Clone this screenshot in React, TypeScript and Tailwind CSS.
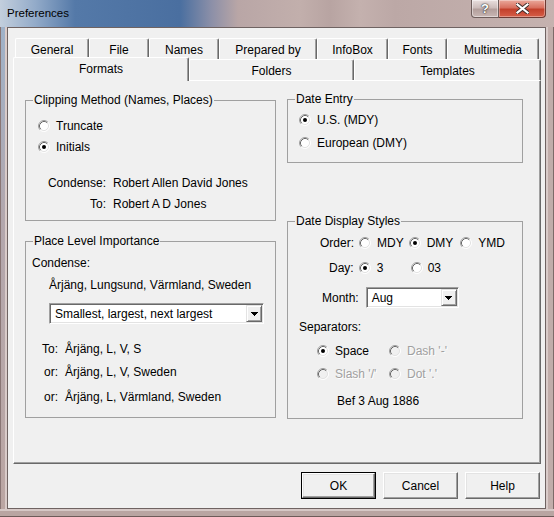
import React from "react";

const FONT = "font-['Liberation_Sans',Arial,sans-serif]";

function Radio({ checked = false, disabled = false }: { checked?: boolean; disabled?: boolean }) {
  return (
    <svg width="12" height="12" viewBox="0 0 12 12" className="shrink-0 block">
      <circle cx="6" cy="6" r="5" fill={disabled ? "#f0f0f0" : "#ffffff"} />
      <path d="M2.11 9.89A5.5 5.5 0 0 1 9.89 2.11" fill="none" stroke="#a0a0a0" />
      <path d="M9.89 2.11A5.5 5.5 0 0 1 2.11 9.89" fill="none" stroke="#ffffff" />
      <path d="M2.82 9.18A4.5 4.5 0 0 1 9.18 2.82" fill="none" stroke="#696969" />
      <path d="M9.18 2.82A4.5 4.5 0 0 1 2.82 9.18" fill="none" stroke="#e3e3e3" />
      {checked && <circle cx="6" cy="6" r="2" fill={disabled ? "#a0a0a0" : "#000000"} />}
    </svg>
  );
}

function Group({
  title,
  className,
  children,
}: {
  title: string;
  className: string;
  children: React.ReactNode;
}) {
  return (
    <fieldset className={`border border-[#a0a0a0] m-0 p-0 shrink-0 ${className}`}>
      <legend className="ml-[7px] px-[1px] leading-[14px]">{title}</legend>
      {children}
    </fieldset>
  );
}

function Combo({ value, className, btnW }: { value: string; className: string; btnW: string }) {
  return (
    <div
      className={`flex items-center bg-white border border-t-[#a0a0a0] border-l-[#a0a0a0] border-r-white border-b-white shadow-[inset_1px_1px_0_#696969,inset_-1px_-1px_0_#e3e3e3] ${className}`}
    >
      <span className="flex-1 pl-[5px] leading-[14px] whitespace-nowrap">{value}</span>
      <div
        className={`${btnW} h-[17px] mr-[1px] flex items-center justify-center bg-[#f0f0f0] border border-t-[#e3e3e3] border-l-[#e3e3e3] border-r-[#696969] border-b-[#696969] shadow-[inset_1px_1px_0_#ffffff,inset_-1px_-1px_0_#a0a0a0]`}
      >
        <svg width="7" height="4" viewBox="0 0 7 4" shapeRendering="crispEdges" className="block">
          <path d="M0 0H7V1H6V2H5V3H4V4H3V3H2V2H1V1H0Z" fill="#000" />
        </svg>
      </div>
    </div>
  );
}

function Tab({ label, w, h, selected = false }: { label: string; w: string; h: string; selected?: boolean }) {
  return (
    <div
      className={`${w} ${h} shrink-0 flex items-center justify-center bg-[#f0f0f0] border-t border-l border-white border-r border-r-[#696969] rounded-t-[2px] shadow-[inset_-1px_0_0_#a0a0a0] leading-[14px] ${
        selected ? "self-start relative z-10 pb-[1px]" : "pt-[2px]"
      }`}
    >
      {label}
    </div>
  );
}

function Btn({ label, def = false }: { label: string; def?: boolean }) {
  return (
    <div
      className={`w-[75px] h-[27px] flex items-center justify-center ${
        def ? "border border-[#000]" : ""
      }`}
    >
      <div
        className={`w-full h-full flex items-center justify-center bg-[#f0f0f0] border border-t-white border-l-white border-r-[#696969] border-b-[#696969] shadow-[inset_-1px_-1px_0_#a0a0a0,inset_1px_1px_0_#e3e3e3] leading-[14px]`}
      >
        {label}
      </div>
    </div>
  );
}

const disabledText = "text-[#a0a0a0] [text-shadow:1px_1px_0_#ffffff]";

export default function App() {
  return (
    <div className={`w-[554px] h-[517px] flex flex-col text-[12px] text-black ${FONT} bg-[#c0acaa] overflow-hidden`}>
      {/* Title bar */}
      <div className="h-[27px] shrink-0 flex items-start bg-[linear-gradient(90deg,#c3cfdd_0px,#93abc9_35px,#5479a8_75px,#4a6fa0_180px,#8d90a8_212px,#b9a6a6_238px,#c2afac_300px,#b8a4a2_330px,#c4b1ae_360px,#bca8a6_395px,#c5b2af_554px)]">
        <div className="flex-1 pl-[7px] pt-[6px] text-[11.5px] leading-[14px] text-black">Preferences</div>
        <div className="flex mr-[8px] mt-0">
          <div className="w-[28px] h-[18px] flex items-center justify-center rounded-bl-[4px] border border-t-0 border-[#6e5d5b] bg-[linear-gradient(180deg,#e9dfde_0%,#cdbdbb_45%,#b39f9c_55%,#c9b7b4_100%)] shadow-[inset_0_0_0_1px_rgba(255,255,255,0.45)]">
            <span className="text-white font-bold text-[13px] leading-[13px] [text-shadow:0_0_2px_#333,0_0_1px_#000]">?</span>
          </div>
          <div className="w-[47px] h-[18px] flex items-center justify-center rounded-br-[4px] border border-l-0 border-t-0 border-[#6e3a33] bg-[linear-gradient(180deg,#eaa99c_0%,#d8705f_45%,#c2402b_55%,#d65e48_100%)] shadow-[inset_0_0_0_1px_rgba(255,255,255,0.35)]">
            <svg width="13" height="11" viewBox="0 0 13 11" className="block">
              <path d="M1.5 1.5L11.5 9.5M11.5 1.5L1.5 9.5" stroke="#3a2a28" strokeWidth="4" strokeLinecap="square" />
              <path d="M1.5 1.5L11.5 9.5M11.5 1.5L1.5 9.5" stroke="#ffffff" strokeWidth="2.2" strokeLinecap="square" />
            </svg>
          </div>
        </div>
      </div>

      <div className="flex-1 flex min-h-0">
        {/* left frame */}
        <div className="w-[7px] shrink-0 bg-[linear-gradient(180deg,#9fb2c9_0%,#b3a7ad_40%,#bba6a3_100%)] shadow-[inset_1px_0_0_#8a7675,inset_-2px_0_0_#d9cbc9]" />
        {/* client */}
        <div className="flex-1 flex flex-col bg-[#f0f0f0] border border-[#6f6362]">
          {/* tab row 1 */}
          <div className="flex mt-[10px] ml-[7px]">
            <Tab label="General" w="w-[74px]" h="h-[21px]" />
            <Tab label="File" w="w-[60px]" h="h-[21px]" />
            <Tab label="Names" w="w-[70px]" h="h-[21px]" />
            <Tab label="Prepared by" w="w-[98px]" h="h-[21px]" />
            <Tab label="InfoBox" w="w-[71px]" h="h-[21px]" />
            <Tab label="Fonts" w="w-[59px]" h="h-[21px]" />
            <Tab label="Multimedia" w="w-[92px]" h="h-[21px]" />
          </div>
          {/* tab row 2 */}
          <div className="flex items-end h-[23px] -mt-[2px] ml-[5px] relative">
            <Tab label="Formats" w="w-[176px]" h="h-[24px]" selected />
            <Tab label="Folders" w="w-[165px]" h="h-[21px]" />
            <Tab label="Templates" w="w-[187px]" h="h-[21px]" />
          </div>
          {/* panel */}
          <div className="ml-[5px] w-[528px] h-[384px] shrink-0 flex gap-[11px] pl-[11px] border border-t-white border-l-white border-r-[#696969] border-b-[#696969] shadow-[inset_-1px_-1px_0_#a0a0a0]">
            {/* left column */}
            <div className="flex flex-col pt-[12px]">
              <Group title="Clipping Method (Names, Places)" className="w-[251px] h-[128px]">
                <div className="mt-[12px] ml-[12px] flex items-center h-[14px]">
                  <Radio />
                  <span className="ml-[6px] leading-[14px]">Truncate</span>
                </div>
                <div className="mt-[7px] ml-[12px] flex items-center h-[14px]">
                  <Radio checked />
                  <span className="ml-[6px] leading-[14px]">Initials</span>
                </div>
                <div className="mt-[22px] grid grid-cols-[80px_auto] gap-x-[7px] gap-y-[7px] leading-[14px]">
                  <span className="text-right">Condense:</span>
                  <span>Robert Allen David Jones</span>
                  <span className="text-right">To:</span>
                  <span>Robert A D Jones</span>
                </div>
              </Group>
              <Group title="Place Level Importance" className="w-[251px] h-[184px] mt-[13px]">
                <div className="mt-[8px] ml-[6px] leading-[14px]">Condense:</div>
                <div className="mt-[8px] ml-[23px] leading-[14px]">Årjäng, Lungsund, Värmland, Sweden</div>
                <Combo value="Smallest, largest, next largest" className="mt-[11px] ml-[23px] w-[215px] h-[21px]" btnW="w-[16px]" />
                <div className="mt-[18px] flex leading-[14px]">
                  <span className="w-[32px] text-right">To:</span>
                  <span className="ml-[7px]">Årjäng, L, V, S</span>
                </div>
                <div className="mt-[9px] flex leading-[14px]">
                  <span className="w-[32px] text-right">or:</span>
                  <span className="ml-[7px]">Årjäng, L, V, Sweden</span>
                </div>
                <div className="mt-[11px] flex leading-[14px]">
                  <span className="w-[32px] text-right">or:</span>
                  <span className="ml-[7px]">Årjäng, L, Värmland, Sweden</span>
                </div>
              </Group>
            </div>
            {/* right column */}
            <div className="flex flex-col pt-[11px]">
              <Group title="Date Entry" className="w-[236px] h-[71px]">
                <div className="mt-[7px] ml-[11px] flex items-center h-[14px]">
                  <Radio checked />
                  <span className="ml-[6px] leading-[14px]">U.S. (MDY)</span>
                </div>
                <div className="mt-[9px] ml-[11px] flex items-center h-[14px]">
                  <Radio />
                  <span className="ml-[6px] leading-[14px]">European (DMY)</span>
                </div>
              </Group>
              <Group title="Date Display Styles" className="w-[236px] h-[205px] mt-[51px]">
                <div className="mt-[8px] pl-[32px] flex items-center h-[14px] leading-[14px]">
                  <span>Order:</span>
                  <span className="ml-[5px]"><Radio /></span>
                  <span className="ml-[6px]">MDY</span>
                  <span className="ml-[5px]"><Radio checked /></span>
                  <span className="ml-[6px]">DMY</span>
                  <span className="ml-[7px]"><Radio /></span>
                  <span className="ml-[6px]">YMD</span>
                </div>
                <div className="mt-[11px] pl-[41px] flex items-center h-[14px] leading-[14px]">
                  <span>Day:</span>
                  <span className="ml-[5px]"><Radio checked /></span>
                  <span className="ml-[6px] w-[34px]">3</span>
                  <span><Radio /></span>
                  <span className="ml-[5px]">03</span>
                </div>
                <div className="mt-[12px] pl-[34px] flex items-center h-[21px]">
                  <span className="leading-[14px]">Month:</span>
                  <Combo value="Aug" className="ml-[7px] w-[93px] h-[21px]" btnW="w-[16px]" />
                </div>
                <div className="mt-[12px] pl-[11px] leading-[14px]">Separators:</div>
                <div className="mt-[10px] pl-[29px] flex items-center h-[14px] leading-[14px]">
                  <div className="w-[72px] flex items-center">
                    <Radio checked />
                    <span className="ml-[6px]">Space</span>
                  </div>
                  <div className="flex items-center">
                    <Radio disabled />
                    <span className={`ml-[6px] ${disabledText}`}>Dash '-'</span>
                  </div>
                </div>
                <div className="mt-[9px] pl-[29px] flex items-center h-[14px] leading-[14px]">
                  <div className="w-[72px] flex items-center">
                    <Radio disabled />
                    <span className={`ml-[6px] ${disabledText}`}>Slash '/'</span>
                  </div>
                  <div className="flex items-center">
                    <Radio disabled />
                    <span className={`ml-[6px] ${disabledText}`}>Dot '.'</span>
                  </div>
                </div>
                <div className="mt-[13px] pl-[49px] leading-[14px]">Bef 3 Aug 1886</div>
              </Group>
            </div>
          </div>
          {/* buttons */}
          <div className="ml-[5px] w-[528px] mt-[8px] flex justify-end gap-[7px] pr-[1px]">
            <Btn label="OK" def />
            <Btn label="Cancel" />
            <Btn label="Help" />
          </div>
        </div>
        {/* right frame */}
        <div className="w-[8px] shrink-0 bg-[#c1adaa] shadow-[inset_2px_0_0_#d9cbc9,inset_-1px_0_0_#7d6a68]" />
      </div>
      <div className="h-[8px] shrink-0 bg-[#b9a5a2] shadow-[inset_0_2px_0_#d6c8c6,inset_0_-1px_0_#6d5b59]" />
    </div>
  );
}
